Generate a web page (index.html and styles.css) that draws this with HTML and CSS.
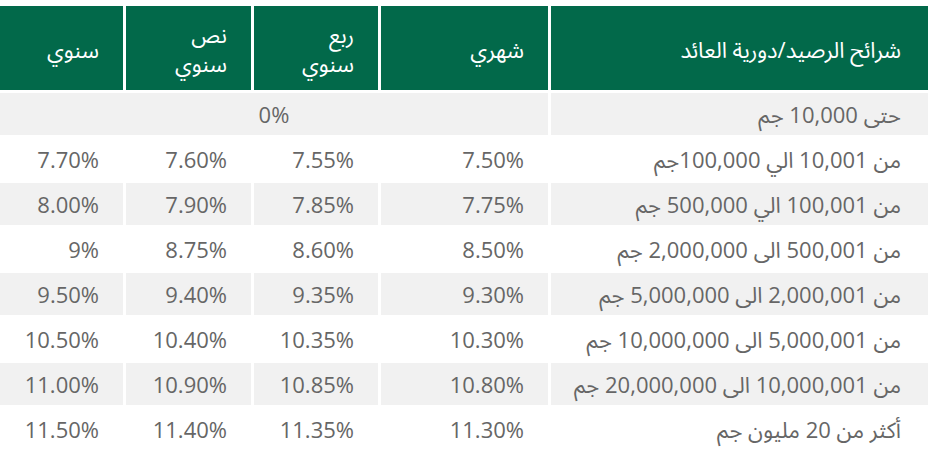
FILE: index.html
```html
<!DOCTYPE html>
<html lang="ar" dir="rtl">
<head>
<meta charset="utf-8">
<link rel="stylesheet" href="styles.css">
</head>
<body>
<table class="rates">
  <colgroup>
    <col class="c-range">
    <col class="c-month">
    <col class="c-quarter">
    <col class="c-half">
    <col class="c-year">
  </colgroup>
  <thead>
    <tr>
      <th class="first">شرائح الرصيد/دورية العائد</th>
      <th>شهري</th>
      <th>ربع<br>سنوي</th>
      <th>نص<br>سنوي</th>
      <th>سنوي</th>
    </tr>
  </thead>
  <tbody>
    <tr class="alt">
      <td class="first">حتى 10,000 جم</td>
      <td colspan="4" class="center">0%</td>
    </tr>
    <tr>
      <td class="first">من 10,001 الي 100,000جم</td>
      <td>7.50%</td><td>7.55%</td><td>7.60%</td><td>7.70%</td>
    </tr>
    <tr class="alt">
      <td class="first">من 100,001 الي 500,000 جم</td>
      <td>7.75%</td><td>7.85%</td><td>7.90%</td><td>8.00%</td>
    </tr>
    <tr>
      <td class="first">من 500,001 الى 2,000,000 جم</td>
      <td>8.50%</td><td>8.60%</td><td>8.75%</td><td>9%</td>
    </tr>
    <tr class="alt">
      <td class="first">من 2,000,001 الى 5,000,000 جم</td>
      <td>9.30%</td><td>9.35%</td><td>9.40%</td><td>9.50%</td>
    </tr>
    <tr>
      <td class="first">من 5,000,001 الى 10,000,000 جم</td>
      <td>10.30%</td><td>10.35%</td><td>10.40%</td><td>10.50%</td>
    </tr>
    <tr class="alt">
      <td class="first">من 10,000,001 الى 20,000,000 جم</td>
      <td>10.80%</td><td>10.85%</td><td>10.90%</td><td>11.00%</td>
    </tr>
    <tr>
      <td class="first">أكثر من 20 مليون جم</td>
      <td>11.30%</td><td>11.35%</td><td>11.40%</td><td>11.50%</td>
    </tr>
  </tbody>
</table>
</body>
</html>
```

FILE: styles.css
```css
html, body {
  margin: 0;
  padding: 0;
  background: #ffffff;
  overflow: hidden;
}

body {
  font-family: "Open Sans", "Noto Sans Arabic", "Noto Naskh Arabic", "DejaVu Sans", sans-serif;
  font-size: 22px;
  color: #666666;
}

.rates {
  direction: rtl;
  border-collapse: separate;
  border-spacing: 3px;
  table-layout: fixed;
  width: 934px;
  margin: 3px -3px 0 -3px;
}

.c-range { width: 377px; }
.c-month { width: 167px; }
.c-quarter { width: 124px; }
.c-half { width: 125px; }
.c-year { width: 123px; }

.rates th {
  background: #02694a;
  color: #ffffff;
  font-weight: normal;
  text-align: right;
  vertical-align: middle;
  height: 84px;
  padding: 2px 24px 0 4px;
  line-height: 29px;
  box-sizing: border-box;
}

.rates td {
  height: 42px;
  padding: 0 24px 0 4px;
  text-align: right;
  vertical-align: middle;
  line-height: 26px;
  box-sizing: border-box;
  white-space: nowrap;
}

.rates th.first,
.rates td.first {
  padding-right: 27px;
}

.rates tr.alt td {
  background: #f1f1f1;
}

.rates td.center {
  text-align: center;
  padding: 0;
}
```
